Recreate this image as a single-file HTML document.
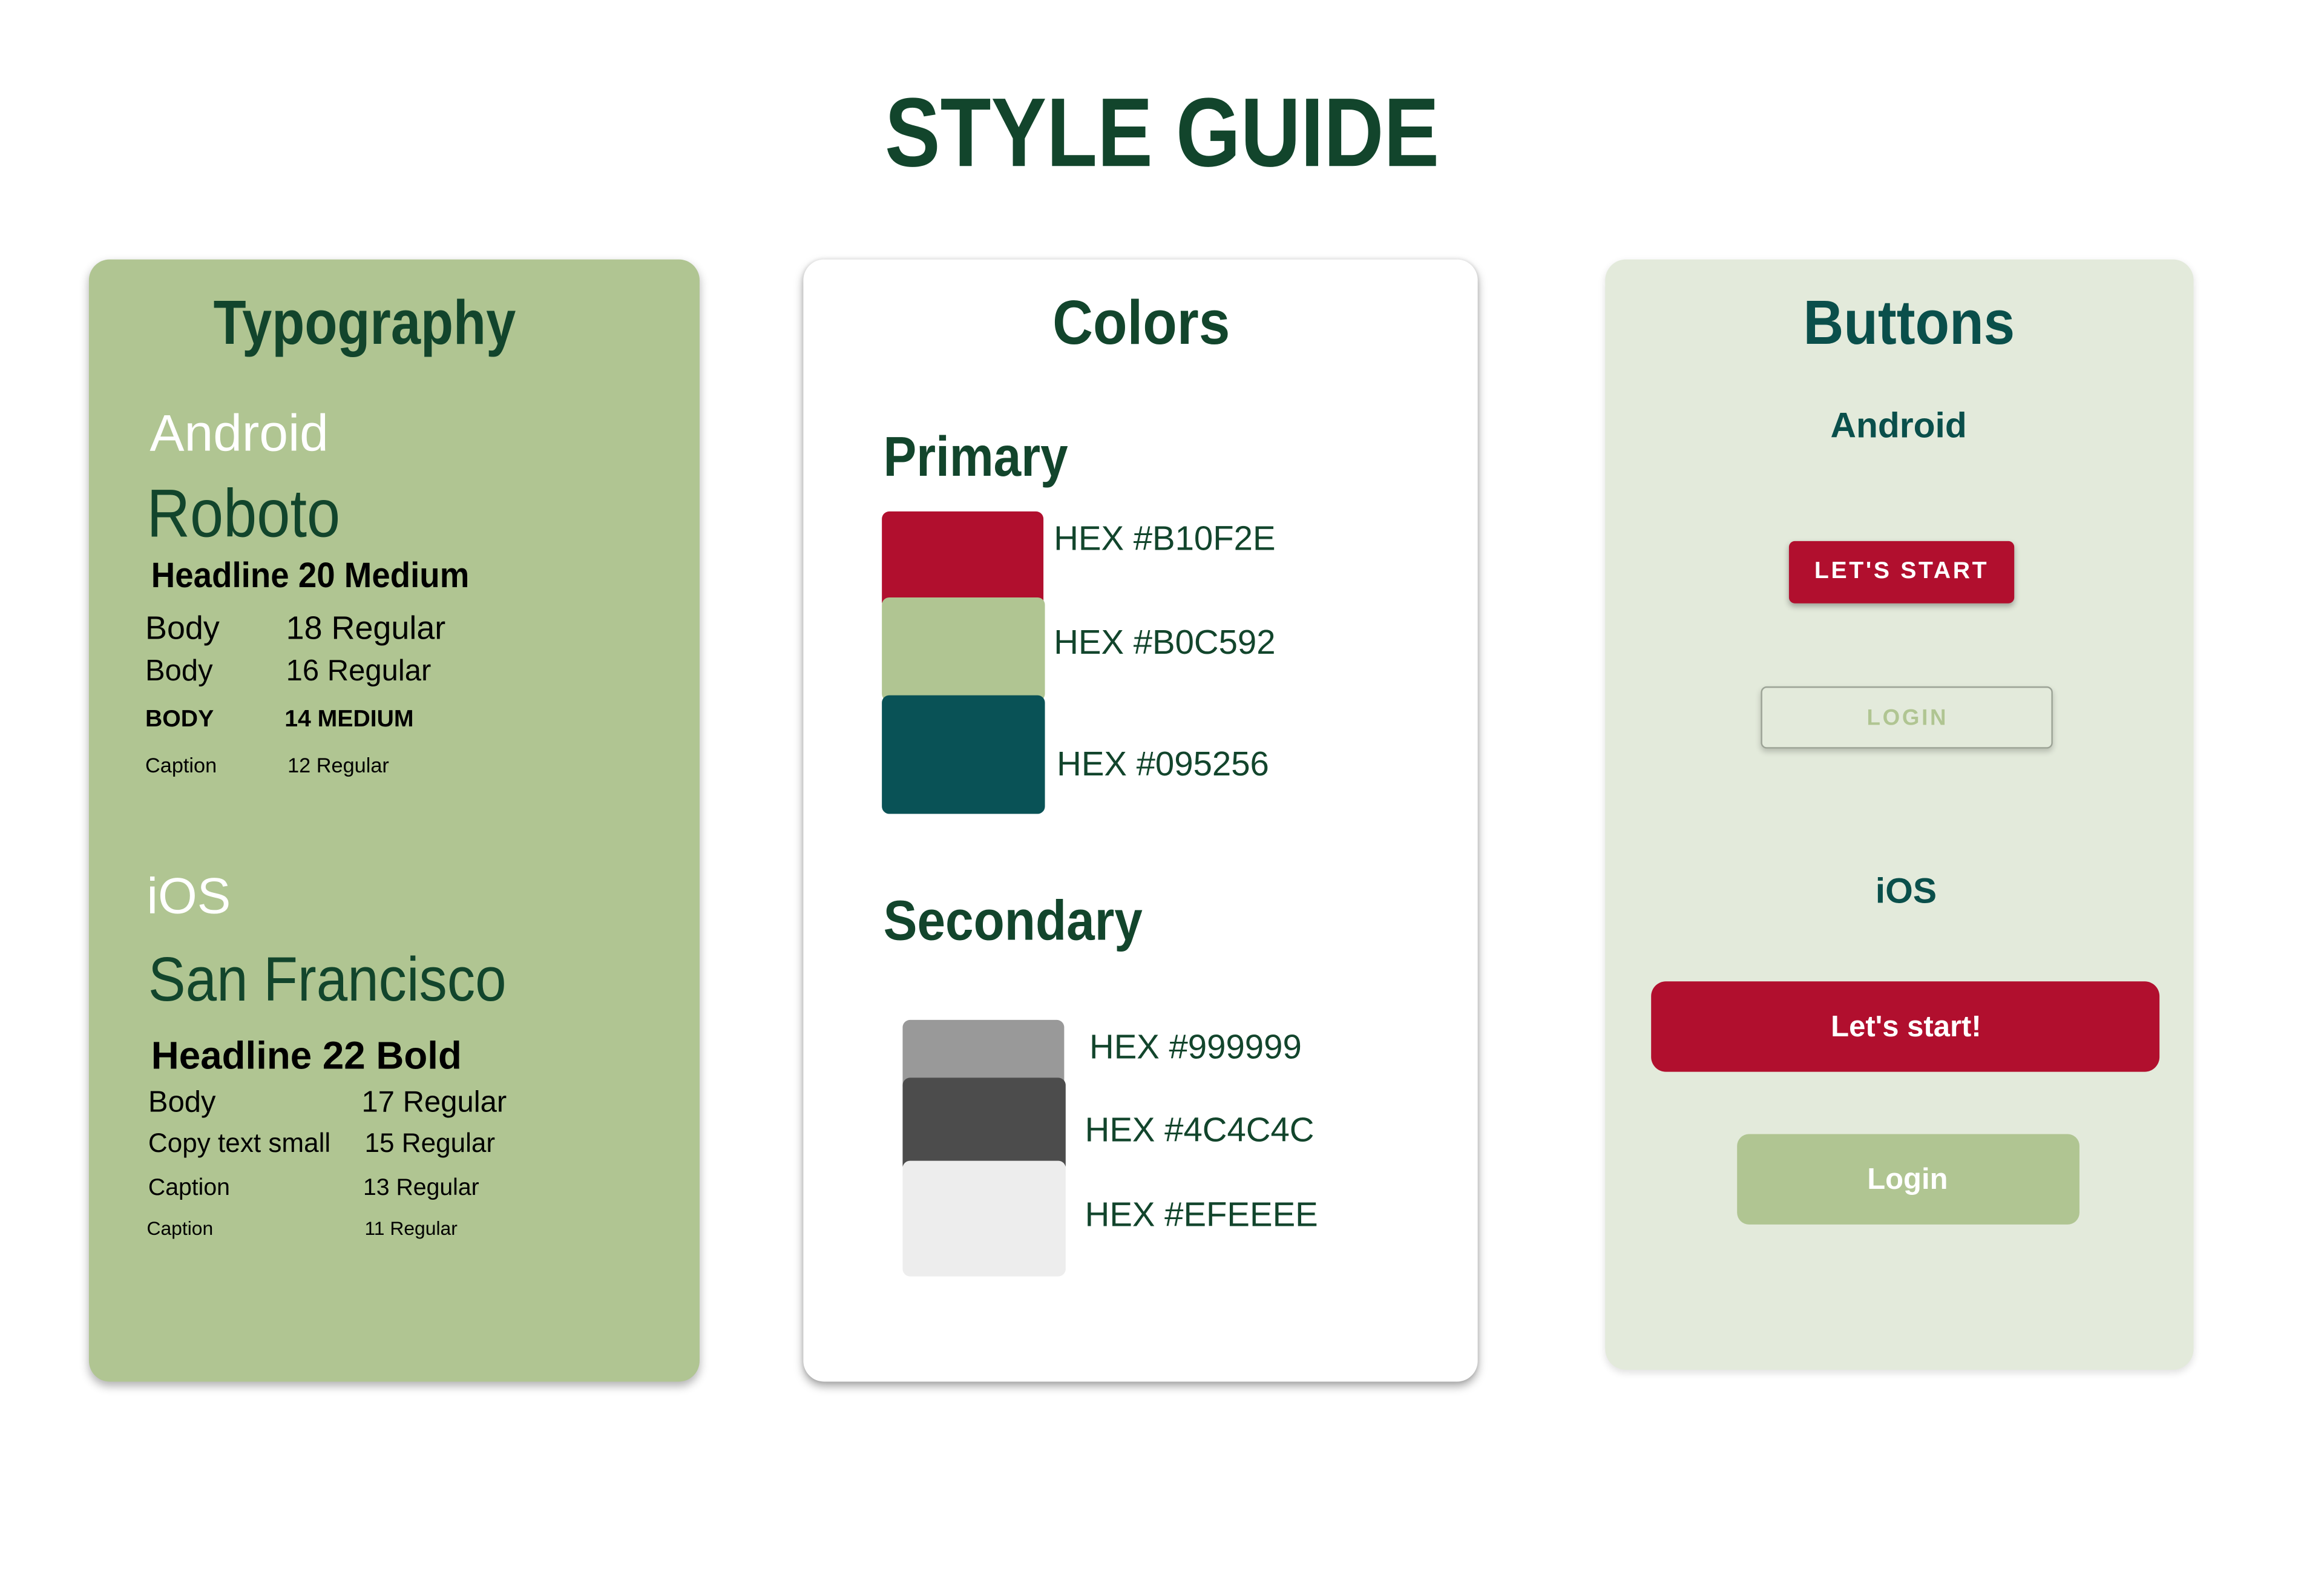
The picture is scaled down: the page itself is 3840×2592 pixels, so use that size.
<!DOCTYPE html>
<html><head><meta charset="utf-8"><style>
html,body{margin:0;padding:0;background:#fff;width:3840px;height:2592px;overflow:hidden}
#w{position:absolute;left:0;top:0;width:1568px;height:1058px;transform:scale(2.449);transform-origin:0 0;font-family:"Liberation Sans",sans-serif}
.a{position:absolute;line-height:1;white-space:nowrap}
.card{position:absolute;border-radius:14px}
.g{color:#12452C}
.t{color:#0a4f4b}
.sw{position:absolute;border-radius:5px}
.c{transform:translateX(-50%)}
</style></head><body><div id="w">
<div class="a g" style="left:784px;top:56px;font-size:66px;font-weight:bold;transform:translateX(-50%) scaleX(0.85)">STYLE GUIDE</div>

<div class="card" style="left:60px;top:175px;width:412px;height:757px;background:#B0C592;box-shadow:0 3px 6px rgba(0,0,0,.3)"></div>
<div class="card" style="left:542px;top:175px;width:455px;height:757px;background:#fff;box-shadow:0 3px 6px rgba(0,0,0,.35),0 0 3px rgba(0,0,0,.12)"></div>
<div class="card" style="left:1083px;top:175px;width:397px;height:749px;background:#E3EADB;box-shadow:0 2px 5px rgba(0,0,0,.12)"></div>

<!-- Typography -->
<div class="a g" style="left:246px;top:197px;font-size:42px;font-weight:bold;transform:translateX(-50%) scaleX(0.86)">Typography</div>
<div class="a" style="left:101px;top:275px;font-size:35px;color:#fff">Android</div>
<div class="a g" style="left:99px;top:323px;font-size:46px;transform:scaleX(0.88);transform-origin:0 0">Roboto</div>
<div class="a" style="left:102px;top:377px;font-size:24px;color:#000;font-weight:bold;transform:scaleX(0.93);transform-origin:0 0">Headline 20 Medium</div>
<div class="a" style="left:98px;top:413px;font-size:22px;color:#000">Body</div>
<div class="a" style="left:193px;top:413px;font-size:22px;color:#000">18 Regular</div>
<div class="a" style="left:98px;top:443px;font-size:20px;color:#000">Body</div>
<div class="a" style="left:193px;top:443px;font-size:20px;color:#000">16 Regular</div>
<div class="a" style="left:98px;top:478px;font-size:16px;color:#000;font-weight:bold">BODY</div>
<div class="a" style="left:192px;top:478px;font-size:16px;color:#000;font-weight:bold">14 MEDIUM</div>
<div class="a" style="left:98px;top:509px;font-size:14px;color:#000">Caption</div>
<div class="a" style="left:194px;top:509px;font-size:14px;color:#000">12 Regular</div>
<div class="a" style="left:99px;top:588px;font-size:34px;color:#fff">iOS</div>
<div class="a g" style="left:100px;top:640px;font-size:42px;transform:scaleX(0.9);transform-origin:0 0">San Francisco</div>
<div class="a" style="left:102px;top:699px;font-size:26px;color:#000;font-weight:bold">Headline 22 Bold</div>
<div class="a" style="left:100px;top:734px;font-size:20px;color:#000">Body</div>
<div class="a" style="left:244px;top:734px;font-size:20px;color:#000">17 Regular</div>
<div class="a" style="left:100px;top:762px;font-size:18px;color:#000">Copy text small</div>
<div class="a" style="left:246px;top:762px;font-size:18px;color:#000">15 Regular</div>
<div class="a" style="left:100px;top:794px;font-size:16px;color:#000">Caption</div>
<div class="a" style="left:245px;top:794px;font-size:16px;color:#000">13 Regular</div>
<div class="a" style="left:99px;top:822px;font-size:13px;color:#000">Caption</div>
<div class="a" style="left:246px;top:822px;font-size:13px;color:#000">11 Regular</div>

<!-- Colors -->
<div class="a g" style="left:770px;top:197px;font-size:42px;font-weight:bold;transform:translateX(-50%) scaleX(0.9)">Colors</div>
<div class="a g" style="left:596px;top:290px;font-size:38px;font-weight:bold;transform:scaleX(0.88);transform-origin:0 0">Primary</div>
<div class="sw" style="left:595px;top:345px;width:109px;height:66px;background:#B10F2E"></div>
<div class="sw" style="left:595px;top:403px;width:110px;height:70px;background:#B0C592"></div>
<div class="sw" style="left:595px;top:469px;width:110px;height:80px;background:#095256"></div>
<div class="a g" style="left:711px;top:352px;font-size:23px">HEX #B10F2E</div>
<div class="a g" style="left:711px;top:422px;font-size:23px">HEX #B0C592</div>
<div class="a g" style="left:713px;top:504px;font-size:23px">HEX #095256</div>
<div class="a g" style="left:596px;top:603px;font-size:38px;font-weight:bold;transform:scaleX(0.9);transform-origin:0 0">Secondary</div>
<div class="sw" style="left:609px;top:688px;width:109px;height:50px;background:#999999"></div>
<div class="sw" style="left:609px;top:727px;width:110px;height:64px;background:#4C4C4C"></div>
<div class="sw" style="left:609px;top:783px;width:110px;height:78px;background:#EDEDED"></div>
<div class="a g" style="left:735px;top:695px;font-size:23px">HEX #999999</div>
<div class="a g" style="left:732px;top:751px;font-size:23px">HEX #4C4C4C</div>
<div class="a g" style="left:732px;top:808px;font-size:23px">HEX #EFEEEE</div>

<!-- Buttons -->
<div class="a t" style="left:1288px;top:197px;font-size:42px;font-weight:bold;transform:translateX(-50%) scaleX(0.9)">Buttons</div>
<div class="a t c" style="left:1281px;top:276px;font-size:24px;font-weight:bold">Android</div>
<div style="position:absolute;left:1207px;top:365px;width:152px;height:42px;background:#B10F2E;border-radius:4px;box-shadow:0 2px 4px rgba(0,0,0,.3)"></div>
<div class="a c" style="left:1283px;top:378px;font-size:16px;color:#fff;letter-spacing:1.5px;font-weight:bold">LET'S START</div>
<div style="position:absolute;left:1188px;top:463px;width:195px;height:40px;border:1.5px solid #9ca396;border-radius:4px;box-shadow:0 2px 4px rgba(0,0,0,.2)"></div>
<div class="a c" style="left:1287px;top:477px;font-size:15px;color:#B0C592;letter-spacing:1.5px;font-weight:bold">LOGIN</div>
<div class="a t c" style="left:1286px;top:590px;font-size:24px;font-weight:bold">iOS</div>
<div style="position:absolute;left:1114px;top:662px;width:343px;height:61px;background:#B10F2E;border-radius:10px"></div>
<div class="a c" style="left:1286px;top:683px;font-size:20px;color:#fff;font-weight:bold">Let's start!</div>
<div style="position:absolute;left:1172px;top:765px;width:231px;height:61px;background:#B0C592;border-radius:8px"></div>
<div class="a c" style="left:1287px;top:786px;font-size:20px;color:#fff;font-weight:bold">Login</div>
</div></body></html>
